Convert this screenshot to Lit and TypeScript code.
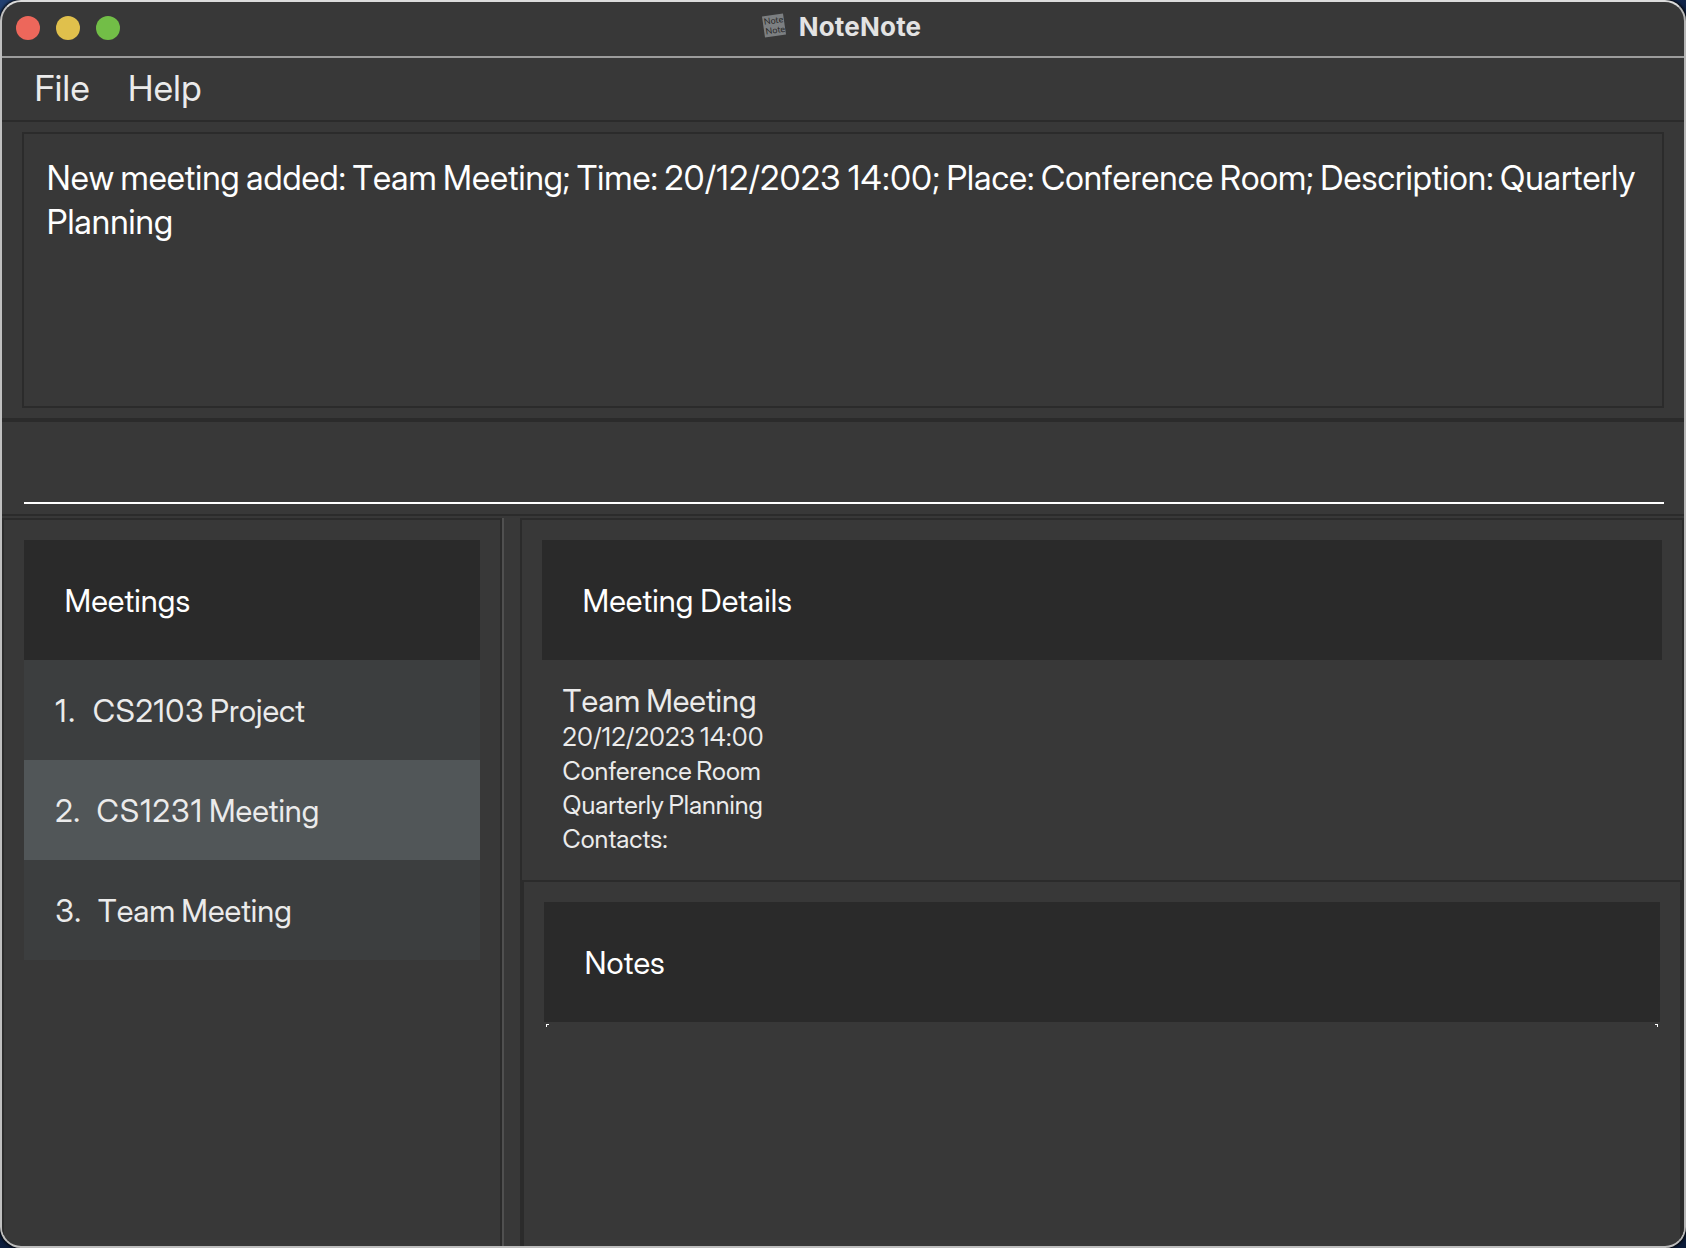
import { LitElement, html, css } from "lit";
import { classMap } from "lit/directives/class-map.js";

interface Meeting {
  index: number;
  code: string;
  rest: string;
  fit: string;
}

const MEETINGS: Meeting[] = [
  { index: 1, code: "CS2103", rest: " Project", fit: "wide" },
  { index: 2, code: "CS1231", rest: " Meeting", fit: "wider" },
  { index: 3, code: "", rest: "Team Meeting", fit: "" },
];

class AppRoot extends LitElement {
  static styles = css`
    * { box-sizing: border-box; }
    :host {
      display: block;
      width: 1686px;
      height: 1248px;
      overflow: hidden;
      background: linear-gradient(160deg, #213f70 0%, #0d1f40 40%, #0c1c3a 100%);
      font-family: "Inter Display", Inter, sans-serif;
      font-kerning: none;
      color: #ebebeb;
      white-space: nowrap;
    }
    .window {
      display: flex;
      flex-direction: column;
      height: 1248px;
      border: 2px solid;
      border-color: #dcdcdc #b6b6b6 #bebebe #c0c0c0;
      border-radius: 21px;
      background: #383838;
      overflow: hidden;
      box-shadow: 0 0 3px 1px #000;
    }
    .titlebar {
      display: grid;
      grid-template-columns: 1fr auto 1fr;
      align-items: center;
      height: 56px;
      flex: none;
      border-bottom: 2px solid #9c9c9c;
    }
    .lights { display: flex; gap: 16px; padding-left: 14px; }
    .light { width: 24px; height: 24px; border-radius: 50%; margin-top: -2px; }
    .red { background: #ed675b; }
    .yellow { background: #e0c04c; }
    .green { background: #72be47; }
    .title { display: flex; align-items: center; gap: 13px; height: 50px; margin: 0 3px 4px 0; }
    .title svg { display: block; margin-top: -3px; }
    .name { font: 700 26px/50px Inter, sans-serif; letter-spacing: 0.2px; color: #e3e3e3; }
    .menu {
      display: flex;
      gap: 37.8px;
      height: 64px;
      flex: none;
      padding: 0 0 2px 32.5px;
      border-bottom: 2px solid #2b2b2b;
      font-size: 35.8px;
      line-height: 60px;
      letter-spacing: 0.45px;
    }
    .result-area { height: 300px; flex: none; padding: 10px 20px; border-bottom: 4px solid #2b2b2b; }
    .result {
      height: 276px;
      padding: 22px 0 0 22.8px;
      border: 2px solid #2b2b2b;
      font-size: 33.6px;
      line-height: 44px;
      letter-spacing: 0.04px;
      word-spacing: -2px;
      color: #fff;
    }
    .result .date { letter-spacing: 0.6px; }
    .command { height: 94px; flex: none; padding: 0 20px 10px 22px; border-bottom: 2px solid #2b2b2b; }
    .field { height: 82px; border-bottom: 2px solid #fff; }
    .split { display: flex; flex: 1; min-height: 0; padding-top: 2px; }
    .list-pane { width: 500px; border: 2px solid #2b2b2b; border-bottom: 0; padding: 20px; }
    .divider { width: 18px; border-left: 2px solid #505050; }
    .detail-pane { flex: 1; border: 2px solid #2b2b2b; border-bottom: 0; display: flex; flex-direction: column; }
    .header {
      height: 120px;
      padding: 1px 0 0 40.5px;
      background: #2a2a2a;
      color: #fff;
      font-size: 31px;
      line-height: 120px;
      letter-spacing: 0.08px;
      word-spacing: -1px;
    }
    .row {
      display: flex;
      gap: 16px;
      height: 100px;
      padding: 1px 0 0 31.2px;
      background: #3c3e3f;
      font-size: 31px;
      line-height: 100px;
      word-spacing: -1.8px;
    }
    .row.alt { background: #515658; }
    .num { letter-spacing: 0.6px; }
    .num.first { letter-spacing: 1.8px; }
    .wide { letter-spacing: 0.6px; }
    .wider { letter-spacing: 1.1px; }
    .details { height: 360px; flex: none; padding: 20px; }
    .info { padding: 22px 0 0 20.6px; font-size: 25.2px; line-height: 34px; word-spacing: -1.8px; }
    .subject { font-size: 31px; line-height: 37.5px; }
    .info .date { letter-spacing: 0.48px; }
    .notes { flex: 1; border: 2px solid #2b2b2b; border-bottom: 0; padding: 20px; }
    .corners { display: flex; justify-content: space-between; padding: 2px; }
    .corners svg { display: block; }
  `;

  render() {
    return html`
      <div class="window">
        <div class="titlebar">
          <div class="lights"><i class="light red"></i><i class="light yellow"></i><i class="light green"></i></div>
          <div class="title">
            <svg width="24" height="25" viewBox="0 0 24 25">
              <path d="M0 3.5 21 0.5 24 21.5 3 24.5z" fill="#7c7f81" />
              <g transform="rotate(-8 12 12)" font-family="Lato, sans-serif" font-size="8.8" fill="#262626">
                <text x="2.4" y="10.5">Note</text><text x="2.8" y="20.3">Note</text>
              </g>
            </svg>
            <span class="name">NoteNote</span>
          </div>
        </div>
        <div class="menu"><span>File</span><span>Help</span></div>
        <div class="result-area">
          <div class="result">
            <div>New meeting added: Team Meeting; Time: <span class="date">20/12/2023 14:00</span>; Place: Conference Room; Description: Quarterly</div>
            <div>Planning</div>
          </div>
        </div>
        <div class="command"><div class="field"></div></div>
        <div class="split">
          <div class="list-pane">
            <div class="header">Meetings</div>
            ${MEETINGS.map(
              (m) => html`<div class=${classMap({ row: true, alt: m.index % 2 === 0 })}>
                <span class=${classMap({ num: true, first: m.index === 1 })}>${m.index}.</span>
                <span><span class=${m.fit}>${m.code}</span>${m.rest}</span>
              </div>`
            )}
          </div>
          <div class="divider"></div>
          <div class="detail-pane">
            <div class="details">
              <div class="header">Meeting Details</div>
              <div class="info">
                <div class="subject">Team Meeting</div>
                <div class="date">20/12/2023 14:00</div>
                <div>Conference Room</div>
                <div>Quarterly Planning</div>
                <div>Contacts:</div>
              </div>
            </div>
            <div class="notes">
              <div class="header">Notes</div>
              <div class="corners">
                <svg width="4" height="4" viewBox="0 0 4 4"><path d="M0 0H3V1H1V3H0z" fill="#fff" /></svg>
                <svg width="4" height="4" viewBox="0 0 4 4"><path d="M4 0H1V1H3V3H4z" fill="#fff" /></svg>
              </div>
            </div>
          </div>
        </div>
      </div>
    `;
  }
}
customElements.define("app-root", AppRoot);
